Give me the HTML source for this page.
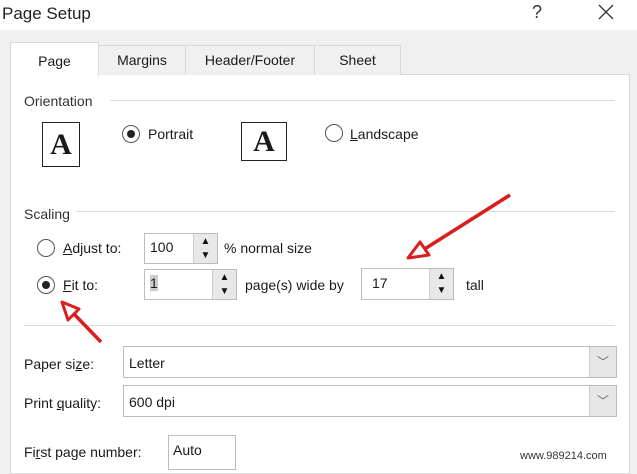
<!DOCTYPE html>
<html><head><meta charset="utf-8"><style>
*{margin:0;padding:0;box-sizing:border-box}
body{width:637px;height:466px;overflow:hidden;background:#f0f0f0;font-family:"Liberation Sans",sans-serif;font-size:14px;color:#1a1a1a;position:relative}
.a{position:absolute;white-space:nowrap}
.top{position:absolute;left:0;top:0;width:637px;height:30px;background:#fff}
.panel{position:absolute;left:10px;top:74px;width:620px;height:400px;background:#fff;border:1px solid #d9d9d9}
.tab{position:absolute;top:45px;height:30px;background:#f0f0f0;border:1px solid #d9d9d9;border-bottom:none;text-align:center;line-height:29px}
.hl{position:absolute;height:1px;background:#dcdcdc}
.radio{position:absolute;width:18px;height:18px;border:1px solid #555;border-radius:50%;background:#fff}
.radio.on::after{content:"";position:absolute;left:4px;top:4px;width:8px;height:8px;border-radius:50%;background:#222}
.box{position:absolute;border:1px solid #bcbcbc;background:#fff}
.spin{position:absolute;top:0;right:0;width:24px;bottom:0;background:#e8e8e8;border-left:1px solid #ccc;font-size:10px;text-align:center;line-height:14px;color:#111;padding-top:1px}
.drop{position:absolute;top:0;right:0;width:27px;bottom:0;background:#e6e6e6;border-left:1px solid #ccc;text-align:center;color:#666;font-size:12px;line-height:30px}
.pg{position:absolute;border:1.5px solid #222;background:#fff;font-family:"Liberation Serif",serif;font-weight:bold;font-size:30px;text-align:center}
</style></head><body>
<div class="top"></div>
<div class="a" style="left:2px;top:4px;font-size:17px;color:#222">Page Setup</div>
<div class="a" style="left:532px;top:2px;font-size:18px;color:#333">?</div>
<svg class="a" style="left:598px;top:4px" width="16" height="16"><path d="M1 1L15 15M15 1L1 15" stroke="#333" stroke-width="1.3"/></svg>
<div class="panel"></div>
<div class="tab" style="left:98px;width:88px">Margins</div>
<div class="tab" style="left:185px;width:130px">Header/Footer</div>
<div class="tab" style="left:314px;width:87px">Sheet</div>
<div class="tab" style="left:10px;width:89px;top:42px;height:34px;background:#fff;line-height:36px">Page</div>
<div class="a" style="left:24px;top:93px;color:#333">Orientation</div>
<div class="hl" style="left:110px;top:100px;width:505px"></div>
<div class="pg" style="left:42px;top:122px;width:38px;height:45px;line-height:44px">A</div>
<div class="radio on" style="left:122px;top:125px"></div>
<div class="a" style="left:148px;top:126px">Portrait</div>
<div class="pg" style="left:241px;top:122px;width:46px;height:39px;line-height:38px">A</div>
<div class="radio" style="left:325px;top:124px"></div>
<div class="a" style="left:350px;top:126px"><u>L</u>andscape</div>
<div class="a" style="left:24px;top:206px;color:#333">Scaling</div>
<div class="hl" style="left:76px;top:211px;width:539px"></div>
<div class="radio" style="left:37px;top:239px"></div>
<div class="a" style="left:63px;top:240px"><u>A</u>djust to:</div>
<div class="box" style="left:144px;top:233px;width:74px;height:31px"><span class="a" style="left:5px;top:5px">100</span><div class="spin">▲<br>▼</div></div>
<div class="a" style="left:224px;top:240px">% normal size</div>
<div class="radio on" style="left:37px;top:276px"></div>
<div class="a" style="left:63px;top:277px"><u>F</u>it to:</div>
<div class="box" style="left:144px;top:269px;width:93px;height:31px"><span class="a" style="left:5px;top:5px;background:#ccc">1</span><div class="spin">▲<br>▼</div></div>
<div class="a" style="left:245px;top:277px">page(s) wide by</div>
<div class="box" style="left:361px;top:268px;width:93px;height:32px"><span class="a" style="left:10px;top:6px">17</span><div class="spin">▲<br>▼</div></div>
<div class="a" style="left:466px;top:277px">tall</div>
<div class="hl" style="left:24px;top:325px;width:591px"></div>
<div class="a" style="left:24px;top:356px">Paper si<u>z</u>e:</div>
<div class="box" style="left:123px;top:346px;width:494px;height:32px"><span class="a" style="left:5px;top:8px">Letter</span><div class="drop">﹀</div></div>
<div class="a" style="left:24px;top:395px">Print <u>q</u>uality:</div>
<div class="box" style="left:123px;top:385px;width:494px;height:32px"><span class="a" style="left:5px;top:8px">600 dpi</span><div class="drop">﹀</div></div>
<div class="a" style="left:24px;top:444px">Fi<u>r</u>st page number:</div>
<div class="box" style="left:168px;top:435px;width:68px;height:35px"><span class="a" style="left:4px;top:6px">Auto</span></div>
<div class="a" style="left:520px;top:450px;font-size:11px;color:#333">www.989214.com</div>
<svg class="a" style="left:0;top:0" width="637" height="466">
<path d="M510 195L423 250" stroke="#d81e1e" stroke-width="3.5" fill="none"/>
<path d="M408 258L420 242L429 255Z" stroke="#d81e1e" stroke-width="3" fill="#fff" stroke-linejoin="round"/>
<path d="M101 342L74 314" stroke="#d81e1e" stroke-width="3.5" fill="none"/>
<path d="M62 302L79 309L68 320Z" stroke="#d81e1e" stroke-width="3" fill="#fff" stroke-linejoin="round"/>
</svg>
</body></html>
